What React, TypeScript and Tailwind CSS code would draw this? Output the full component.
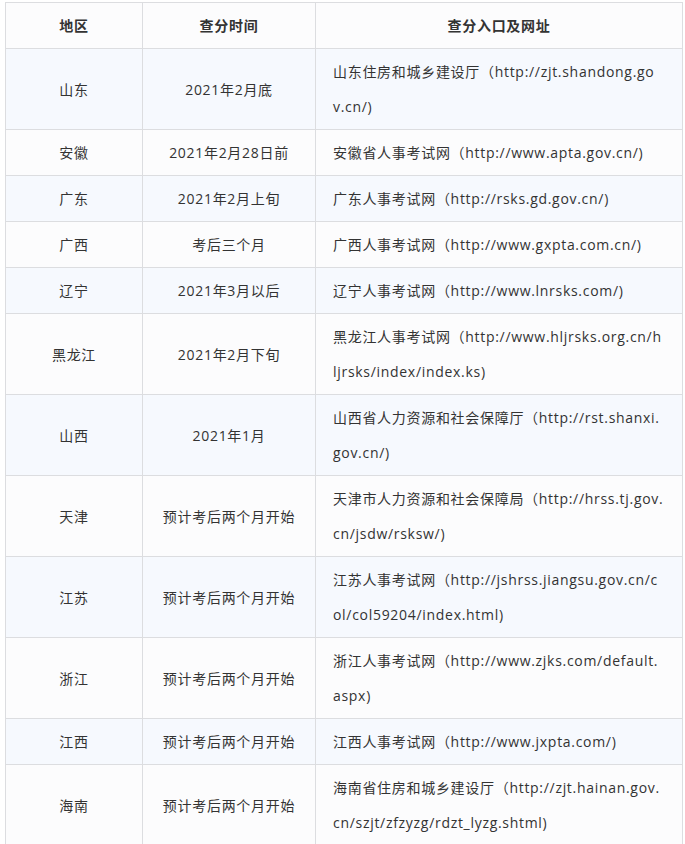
const rows: { region: string; time: string; site: string[] }[] = [
  { region: '山东', time: '2021年2月底', site: ['山东住房和城乡建设厅（http://zjt.shandong.go', 'v.cn/)'] },
  { region: '安徽', time: '2021年2月28日前', site: ['安徽省人事考试网（http://www.apta.gov.cn/)'] },
  { region: '广东', time: '2021年2月上旬', site: ['广东人事考试网（http://rsks.gd.gov.cn/)'] },
  { region: '广西', time: '考后三个月', site: ['广西人事考试网（http://www.gxpta.com.cn/)'] },
  { region: '辽宁', time: '2021年3月以后', site: ['辽宁人事考试网（http://www.lnrsks.com/)'] },
  { region: '黑龙江', time: '2021年2月下旬', site: ['黑龙江人事考试网（http://www.hljrsks.org.cn/h', 'ljrsks/index/index.ks)'] },
  { region: '山西', time: '2021年1月', site: ['山西省人力资源和社会保障厅（http://rst.shanxi.', 'gov.cn/)'] },
  { region: '天津', time: '预计考后两个月开始', site: ['天津市人力资源和社会保障局（http://hrss.tj.gov.', 'cn/jsdw/rsksw/)'] },
  { region: '江苏', time: '预计考后两个月开始', site: ['江苏人事考试网（http://jshrss.jiangsu.gov.cn/c', 'ol/col59204/index.html)'] },
  { region: '浙江', time: '预计考后两个月开始', site: ['浙江人事考试网（http://www.zjks.com/default.', 'aspx)'] },
  { region: '江西', time: '预计考后两个月开始', site: ['江西人事考试网（http://www.jxpta.com/)'] },
  { region: '海南', time: '预计考后两个月开始', site: ['海南省住房和城乡建设厅（http://zjt.hainan.gov.', 'cn/szjt/zfzyzg/rdzt_lyzg.shtml)'] },
];

const cell = 'border border-[#dcdde0] px-[17px] py-[5px] leading-[35px]';

export default function App() {
  return (
    <div
      className="min-h-screen bg-white pl-[5px] pt-[2px] text-[14px] text-[#333] tracking-[0.7px]"
      style={{ fontFamily: '"Open Sans", "Noto Sans CJK SC", sans-serif' }}
    >
      <table className="w-[677px] table-fixed border-collapse">
        <colgroup>
          <col className="w-[137px]" />
          <col className="w-[173px]" />
          <col className="w-[367px]" />
        </colgroup>
        <thead>
          <tr className="bg-[#fcfcfd]">
            <th className={`${cell} text-center font-bold`}>地区</th>
            <th className={`${cell} text-center font-bold`}>查分时间</th>
            <th className={`${cell} text-center font-bold`}>查分入口及网址</th>
          </tr>
        </thead>
        <tbody>
          {rows.map((r, i) => (
            <tr key={r.region} className={i % 2 === 0 ? 'bg-[#f6f9fe]' : 'bg-[#fcfcfd]'}>
              <td className={`${cell} text-center`}>{r.region}</td>
              <td className={`${cell} text-center`}>{r.time}</td>
              <td className={`${cell} text-left whitespace-nowrap`}>
                {r.site.map((line) => (
                  <div key={line}>{line}</div>
                ))}
              </td>
            </tr>
          ))}
        </tbody>
      </table>
    </div>
  );
}
